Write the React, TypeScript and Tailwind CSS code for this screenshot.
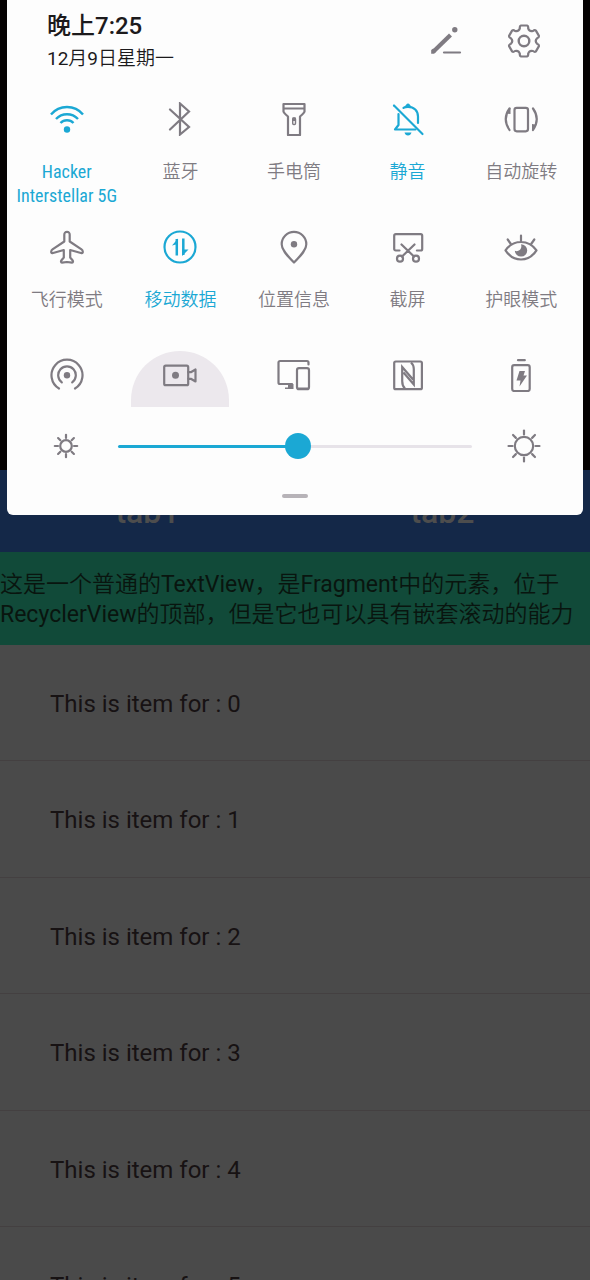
import { useState, type ReactNode } from "react";

const stroke = {
  fill: "none",
  stroke: "currentColor",
  strokeWidth: 2.2,
  strokeLinecap: "round",
  strokeLinejoin: "round",
} as const;
const solid = { fill: "currentColor", stroke: "none" } as const;

function Icon({ children }: { children: ReactNode }) {
  return (
    <svg viewBox="0 0 34 34" className="relative size-[34px] shrink-0" aria-hidden="true" {...stroke}>
      {children}
    </svg>
  );
}

const icons = {
  wifi: (
    <Icon>
      <path d="M1 12.5a20.8 20.8 0 0 1 32 0M6 17a15 15 0 0 1 22 0M10.5 21a9 9 0 0 1 13 0" strokeWidth="2.4" strokeLinecap="butt" />
      <circle cx="17" cy="27.5" r="3.2" {...solid} />
    </Icon>
  ),
  bluetooth: (
    <Icon>
      <path d="M7 7.5 26 25l-9 7.5v-31l9 8L7 27.5" strokeLinejoin="miter" />
    </Icon>
  ),
  torch: (
    <Icon>
      <path d="M6.5 2h21v7.5q-.3 1.5-4.5 5V33H11V14.5q-4.2-3.5-4.5-5zM6.5 6.5h21" />
      <rect x="15.7" y="16" width="2.8" height="6.5" rx="1" strokeWidth="1.4" />
      <path d="M15.5 15.5h3.2V19h-3.2z" {...solid} />
    </Icon>
  ),
  bell: (
    <Icon>
      <path d="M3 3.5 31.5 32" />
      <path d="M12.5 5.8Q14 4.8 17 4.8c6 0 10 4 10 9.7V21M7.5 12v11l-3.5 4.5h20.5" />
      <path d="M12.8 5.5 16 1.8q1-.6 2 0l3.2 3.7zM13.5 30.5h7q-.8 3-3.5 3t-3.5-3z" {...solid} />
    </Icon>
  ),
  rotate: (
    <Icon>
      <rect x="10.5" y="5.8" width="13.5" height="23.5" rx="2.2" />
      <path d="M5.5 6.5q-7.5 10.5 0 21.5M29 6.5q7.5 10.5 0 21.5" />
      <path d="M6.5 5.5v6.5l-4.5-.5zM28 29v-7l4.5.7z" {...solid} />
    </Icon>
  ),
  plane: (
    <Icon>
      <path d="M17 1.8c-1.7 0-2.7 1.2-2.7 3V11.5L2.5 19.3c-1.5 1-1.8 3.9-.3 3.9L13.8 20v7.5l-2.3 2.7c-.8 1-.6 2.5.4 2.5l5.1-.7 5.1.7c1 0 1.2-1.5.4-2.5l-2.300-2.700V20l11.600 3.200c1.500 0 1.200-2.900-.3-3.900L19.700 11.500V4.800c0-1.800-1-3-2.700-3z" />
    </Icon>
  ),
  data: (
    <Icon>
      <circle cx="17" cy="17" r="15.5" />
      <path d="M13.8 9v16.5M20.3 8.5v16.5" strokeWidth="2.5" strokeLinecap="butt" />
      <path d="M15 8.5v5.5L9 15.5zM19.1 26v-6.5h6.4z" {...solid} />
    </Icon>
  ),
  pin: (
    <Icon>
      <path d="M17 32.5C9 24.5 4.7 19.5 4.7 14.2a12.3 12.3 0 0 1 24.6 0C29.3 19.5 25 24.5 17 32.5z" />
      <circle cx="17" cy="14.3" r="3.2" {...solid} />
    </Icon>
  ),
  screenshot: (
    <Icon>
      <path d="M8.5 20.5H4.7A1.5 1.5 0 0 1 3.2 19V5.7a1.5 1.5 0 0 1 1.5-1.5h25a1.5 1.5 0 0 1 1.5 1.5V19a1.5 1.5 0 0 1-1.5 1.5h-3.8M10.5 14.5l12.5 12M23.5 14.5 11 26.5" />
      <circle cx="9" cy="28.7" r="3" />
      <circle cx="25" cy="28.7" r="3" />
    </Icon>
  ),
  eye: (
    <Icon>
      <path d="M1.5 20.3Q7.5 12 17 12t15.5 8.3Q26.5 29.5 17 29.5T1.5 20.3zM17 5.5V12M3.7 9.5l2.8 4M30.3 9.5l-2.8 4" />
      <path d="M17 14.2a6.2 6.2 0 1 1-6.2 6.5c1.5.8 3.5.6 4.9-.6 1.700-1.500 2-3.900 1.300-5.900z" {...solid} />
    </Icon>
  ),
  hotspot: (
    <Icon>
      <path d="M9 30.5a15.5 15.5 0 1 1 16 0M11.8 24.3a8.8 8.8 0 1 1 10.4 0" />
      <circle cx="17" cy="17.3" r="3.2" {...solid} />
    </Icon>
  ),
  camera: (
    <Icon>
      <rect x="1.2" y="7.7" width="24" height="19.5" rx="1.5" />
      <path d="M25.2 14.2h2.6l4.7-2.7v12l-4.700-2.700h-2.600" />
      <circle cx="12.5" cy="17.3" r="3.5" {...solid} />
    </Icon>
  ),
  devices: (
    <Icon>
      <path d="M15 26H3a1.5 1.5 0 0 1-1.5-1.5v-20A1.5 1.5 0 0 1 3 3h27a1.5 1.5 0 0 1 1.5 1.5V6.5" />
      <path d="M11 26h5.5v5H8v-1.5h3z" {...solid} />
      <rect x="20" y="10.2" width="12" height="21" rx="2" />
      <path d="M20 29.5h12v2H20z" {...solid} />
    </Icon>
  ),
  nfc: (
    <Icon>
      <rect x="3.2" y="3.5" width="27.7" height="27.7" rx="1.5" />
      <path
        d="M14 30.5Q11.2 28 11.2 23V9L22 21.5M20 4.5Q22.8 7 22.8 11V26.5L12.5 14.5"
        strokeLinejoin="miter"
        strokeLinecap="butt"
      />
    </Icon>
  ),
  battery: (
    <Icon>
      <path d="M14 2.2h6.8" />
      <rect x="8.2" y="7.2" width="17.5" height="25.8" rx="2" />
      <path d="M15.5 13h5.5l-1.5 4.5h3.5L15.5 28.5l1-6h-4z" {...solid} />
    </Icon>
  ),
};

const gearPath = (() => {
  const at = (deg: number, r: number) => {
    const a = (deg * Math.PI) / 180;
    return `${(17 + r * Math.sin(a)).toFixed(2)} ${(17 - r * Math.cos(a)).toFixed(2)}`;
  };
  let d = `M${at(-11, 15.8)}`;
  for (let lobe = 0; lobe < 360; lobe += 60) {
    d += `L${at(lobe + 11, 15.8)}Q${at(lobe + 17, 15.6)} ${at(lobe + 18, 13.4)}`;
    d += `Q${at(lobe + 30, 10.4)} ${at(lobe + 42, 13.4)}Q${at(lobe + 43, 15.6)} ${at(lobe + 49, 15.8)}`;
  }
  return d + "z";
})();

function Sun({ ring, from, to }: { ring: number; from: number; to: number }) {
  return (
    <Icon>
      <circle cx="17" cy="17" r={ring} />
      {[0, 45, 90, 135, 180, 225, 270, 315].map((a) => (
        <path key={a} d={`M17 ${17 - from}V${17 - to}`} transform={`rotate(${a} 17 17)`} />
      ))}
    </Icon>
  );
}

type Tile = { icon: keyof typeof icons; label: string; active?: boolean; narrow?: boolean };

const tiles: Tile[] = [
  { icon: "wifi", label: "Hacker Interstellar 5G", active: true, narrow: true },
  { icon: "bluetooth", label: "蓝牙" },
  { icon: "torch", label: "手电筒" },
  { icon: "bell", label: "静音", active: true },
  { icon: "rotate", label: "自动旋转" },
  { icon: "plane", label: "飞行模式" },
  { icon: "data", label: "移动数据", active: true },
  { icon: "pin", label: "位置信息" },
  { icon: "screenshot", label: "截屏" },
  { icon: "eye", label: "护眼模式" },
];

const peekTiles: { icon: keyof typeof icons; name: string; pressed?: boolean }[] = [
  { icon: "hotspot", name: "热点" },
  { icon: "camera", name: "屏幕录制", pressed: true },
  { icon: "devices", name: "多屏互动" },
  { icon: "nfc", name: "NFC" },
  { icon: "battery", name: "省电模式" },
];

function QuickPanel() {
  const [level, setLevel] = useState(51);
  return (
    <section className="absolute inset-x-[7px] top-0 flex flex-col rounded-b-md bg-[#fdfdfd] text-[#7f7b82]">
      <header className="flex h-[102px] items-start justify-between pr-[42px] pl-10">
        <div className="pt-2 text-[#1c1a1c]">
          <h1 className="text-2xl leading-9 font-medium">晚上7:25</h1>
          <p className="font-['Roboto','Noto_Sans_CJK_SC_DemiLight','Noto_Sans_CJK_SC',sans-serif] text-[19px] leading-[30px]">
            12月9日星期一
          </p>
        </div>
        <div className="flex gap-11 pt-6">
          <button aria-label="编辑">
            <Icon>
              <path d="M4.5 27.5 21.5 11" strokeWidth="4.2" strokeLinecap="butt" />
              <path d="M2.2 29.7V26l2-1.500 3 3-2 2.200z" {...solid} />
              <circle cx="25.8" cy="5.8" r="2.7" {...solid} />
              <path d="M15 28.5h16" />
            </Icon>
          </button>
          <button aria-label="设置">
            <Icon>
              <path d={gearPath} />
              <circle cx="17" cy="17" r="5.3" strokeWidth="2.4" />
            </Icon>
          </button>
        </div>
      </header>

      <div className="grid auto-rows-[128px] grid-cols-5 pr-[5px] pl-[3px]">
        {tiles.map((t) => (
          <button
            key={t.label}
            className={`flex flex-col items-center gap-6 text-lg leading-6 ${t.active ? "text-[#1ba8d4]" : ""}`}
          >
            {icons[t.icon]}
            <span className={t.narrow ? "font-['Roboto_Condensed','Roboto',sans-serif]" : "font-[350]"}>{t.label}</span>
          </button>
        ))}
      </div>

      <div className="grid h-[49px] grid-cols-5 pr-[5px] pl-[3px]">
        {peekTiles.map((t) => (
          <button key={t.icon} aria-label={t.name} className="relative flex flex-col items-center">
            {t.pressed && <span className="absolute -top-[7px] bottom-0 w-[98px] rounded-t-full bg-[#ece8ed]" />}
            {icons[t.icon]}
          </button>
        ))}
      </div>

      <div className="flex h-[78px] items-center justify-between px-[42px]">
        <Sun ring={5.8} from={8} to={11.2} />
        <input
          type="range"
          aria-label="亮度"
          min={0}
          max={100}
          value={level}
          onChange={(e) => setLevel(Number(e.target.value))}
          style={{ backgroundImage: `linear-gradient(to right, #1ba8d4 ${level}%, #e7e3e9 ${level}%)` }}
          className="mx-[35px] h-[3px] min-w-0 flex-1 appearance-none rounded-full [&::-webkit-slider-thumb]:size-[26px] [&::-webkit-slider-thumb]:appearance-none [&::-webkit-slider-thumb]:rounded-full [&::-webkit-slider-thumb]:bg-[#1ba8d4]"
        />
        <Sun ring={9.2} from={11.5} to={15.5} />
      </div>

      <div className="flex h-[30px] justify-center pt-[9px]">
        <span className="h-1 w-[26px] rounded-full bg-[#b7b3b8]" />
      </div>
    </section>
  );
}

export default function App() {
  return (
    <div
      lang="zh-CN"
      className="relative h-screen overflow-hidden bg-[#4a4a4a] font-['Roboto','Noto_Sans_CJK_SC',sans-serif]"
    >
      <main>
        <div className="h-[470px] bg-[#060303]" />
        <nav className="flex h-[82px] items-center bg-[#142848] pt-[2px] text-[32px] font-medium text-[#4d4d4d]">
          <button className="flex-1">tab1</button>
          <button className="flex-1">tab2</button>
        </nav>
        <p className="bg-[#114a39] pt-[18px] pb-[15px] font-['Roboto','Noto_Sans_CJK_SC_DemiLight','Noto_Sans_CJK_SC',sans-serif] text-[23px] leading-[30px] text-[#09150f]">
          这是一个普通的TextView，是Fragment中的元素，位于RecyclerView的顶部，但是它也可以具有嵌套滚动的能力
        </p>
        <ul>
          {[0, 1, 2, 3, 4, 5].map((n) => (
            <li
              key={n}
              className="flex h-[116px] items-center border-b border-[#444041] pt-[2px] pl-[50px] text-2xl text-[#171213] even:h-[117px]"
            >
              This is item for : {n}
            </li>
          ))}
        </ul>
      </main>
      <QuickPanel />
    </div>
  );
}
